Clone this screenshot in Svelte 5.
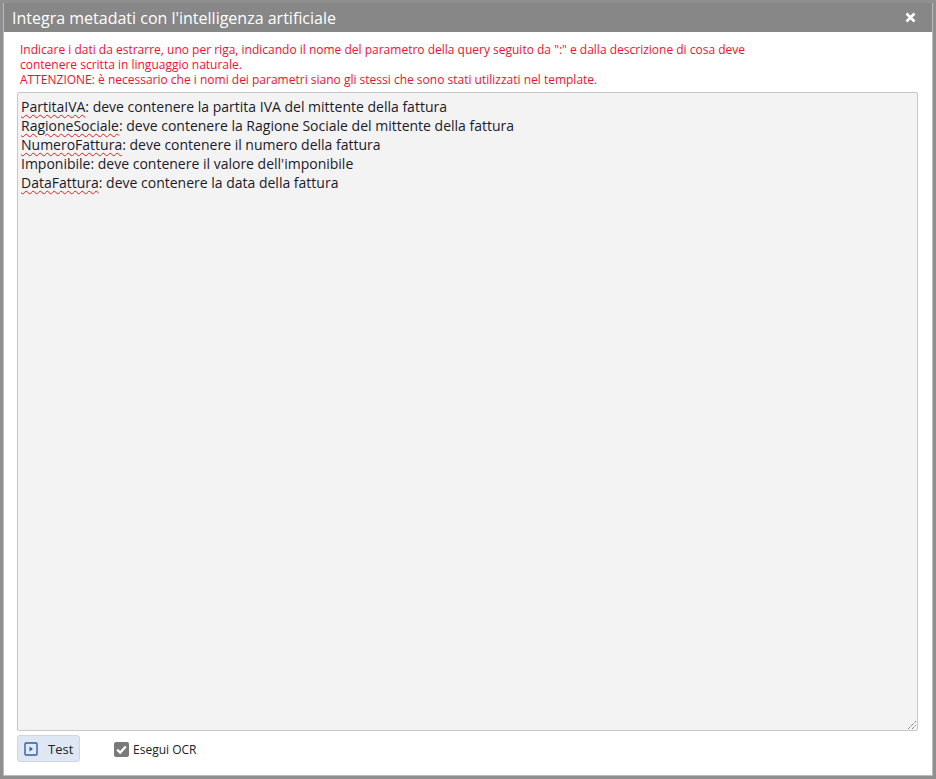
<script lang="ts">
  let prompt = $state(`PartitaIVA: deve contenere la partita IVA del mittente della fattura
RagioneSociale: deve contenere la Ragione Sociale del mittente della fattura
NumeroFattura: deve contenere il numero della fattura
Imponibile: deve contenere il valore dell'imponibile
DataFattura: deve contenere la data della fattura`);
  let runOcr = $state(true);

  const misspelled = ['PartitaIVA', 'RagioneSociale', 'NumeroFattura', 'DataFattura'];

  // split each line at the colon, so the parameter name can get the spell-check squiggle
  let lines = $derived(prompt.split('\n').map((l) => {
    const i = l.indexOf(':');
    return { name: l.slice(0, i), rest: l.slice(i) };
  }));
</script>

<div class="backdrop">
  <div class="dialog">
    <header class="titlebar">
      <span class="title">Integra metadati con l'intelligenza artificiale</span>
      <button class="close" aria-label="Chiudi">
        <svg width="11" height="11" viewBox="0 0 11 11">
          <path d="M1.5 1.5 L9.5 9.5 M9.5 1.5 L1.5 9.5" stroke="#fff" stroke-width="2.6" />
        </svg>
      </button>
    </header>

    <div class="body">
      <p class="hint">
        Indicare i dati da estrarre, uno per riga, indicando il nome del parametro della query seguito da ":" e dalla descrizione di cosa deve<br />
        contenere scritta in linguaggio naturale.<br />
        ATTENZIONE: è necessario che i nomi dei parametri siano gli stessi che sono stati utilizzati nel template.
      </p>

      <div class="editor">
        {#each lines as line}
          <div class="line"><span class:squiggle={misspelled.includes(line.name)}>{line.name}</span>{line.rest}</div>
        {/each}
        <svg class="grip" width="8" height="8" viewBox="0 0 8 8">
          <path d="M0 8 L8 0 M4 8 L8 4" stroke="#555" stroke-width="1" stroke-dasharray="1 1" />
        </svg>
      </div>

      <div class="actions">
        <button class="test">
          <svg width="14" height="14" viewBox="0 0 14 14">
            <rect x="1" y="1" width="12" height="12" rx="1" fill="#e1e9f5" stroke="#2f5fa8" stroke-width="1.4" />
            <path d="M5.5 4.5 L9 7 L5.5 9.5 Z" fill="#2f5fa8" />
          </svg>
          <span>Test</span>
        </button>
        <label class="ocr">
          <input type="checkbox" bind:checked={runOcr} />
          <span class="box">
            <svg width="15" height="15" viewBox="0 0 15 15">
              <path d="M3.2 7.6 L6.2 10.6 L11.8 4.4" fill="none" stroke="#fff" stroke-width="2.2" />
            </svg>
          </span>
          Esegui OCR
        </label>
      </div>
    </div>
  </div>
</div>

<style>
  :global(body) { margin: 0; background: #8c8c8c; }
  .backdrop {
    height: 779px; box-sizing: border-box; padding: 3px 3px 3px 3px;
    font-family: "Open Sans", sans-serif; background: #8f8f8f;
  }
  .dialog {
    height: 773px; box-sizing: border-box; display: flex; flex-direction: column;
    background: #fff; border: 1px solid #bbb; border-top: none;
  }
  .titlebar {
    height: 29px; flex-shrink: 0; display: flex; align-items: center; justify-content: space-between;
    background: #878787; color: #fff; padding: 0 16px 0 8px;
  }
  .title { font-size: 16px; }
  .close { display: flex; padding: 0; border: none; background: transparent; cursor: pointer; }
  .body { flex: 1; display: flex; flex-direction: column; padding: 10px 14px 0 13px; min-height: 0; }
  .hint { margin: 0 0 5px 3px; color: #f01030; font-size: 12px; line-height: 15px; }
  .editor {
    height: 639px; box-sizing: border-box; position: relative; flex-shrink: 0;
    background: #f3f3f3; border: 1px solid #c8c8c8; border-radius: 2px;
    padding: 4px 3px; color: #1a1a2a; font-size: 14px; line-height: 19px;
  }
  .squiggle { text-decoration: underline wavy #e02020 1px; text-underline-offset: 2px; }
  .grip { position: absolute; right: 1px; bottom: 1px; }
  .actions { display: flex; align-items: center; gap: 34px; margin-top: 4px; }
  .test {
    width: 63px; height: 27px; display: flex; align-items: center; gap: 10px; padding: 0 0 0 6px;
    background: #dfe7f4; border: 1px solid #ccd5e3; border-radius: 3px;
    font: 13px "Open Sans", sans-serif; color: #222; cursor: pointer;
  }
  .ocr { display: flex; align-items: center; gap: 4px; font-size: 12px; color: #222; margin-top: 2px; }
  .ocr input { display: none; }
  .box { width: 15px; height: 15px; background: #7a7a7a; border-radius: 2px; display: flex; }
</style>
